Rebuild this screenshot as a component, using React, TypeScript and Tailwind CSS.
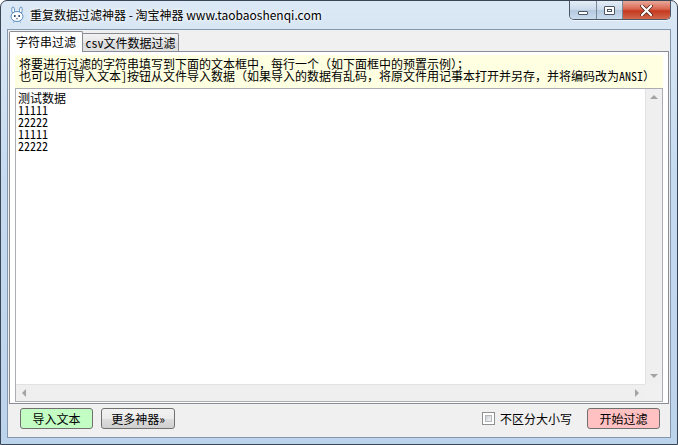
import React from "react";

const ui = "font-['Noto_Sans_CJK_SC','Noto_Sans',sans-serif]";
const mono = "font-['Noto_Sans_Mono_CJK_SC','Noto_Sans_CJK_SC',monospace]";

const AppIcon = () => (
  <svg width="16" height="17" viewBox="0 0 16 17">
    <path d="M4 1 C2.5 1 2.5 5 3.5 7 L5.5 6.5 C5.5 4 5.5 1 4 1Z" fill="#fff" stroke="#4a7fb8" strokeWidth="0.9" />
    <path d="M12 1 C13.5 1 13.5 5 12.5 7 L10.5 6.5 C10.5 4 10.5 1 12 1Z" fill="#fff" stroke="#4a7fb8" strokeWidth="0.9" />
    <ellipse cx="8" cy="10.5" rx="6" ry="5" fill="#fff" stroke="#4a7fb8" strokeWidth="0.9" />
    <circle cx="5.8" cy="10" r="1" fill="#1d3e66" />
    <circle cx="10.2" cy="10" r="1" fill="#1d3e66" />
    <path d="M7 12.5 Q8 13.3 9 12.5" stroke="#1d3e66" strokeWidth="0.7" fill="none" />
    <path d="M5 15.5 L4.5 16.5 M11 15.5 L11.5 16.5" stroke="#4a7fb8" strokeWidth="0.9" />
  </svg>
);

const CaptionButtons = () => (
  <div className="flex h-[19px] mr-[6px] rounded-b-[5px] border border-t-0 border-[#4c5868] overflow-hidden shadow-[0_1px_0_rgba(255,255,255,0.6)]">
    <div className="w-[27px] flex items-center justify-center bg-[linear-gradient(180deg,#e4edf7_0%,#c9d9ea_50%,#b4c8de_51%,#c9dbee_100%)] border-r border-[#7a8797]">
      <div className="w-[10px] h-[4px] mt-[5px] bg-white border border-[#4b5563] rounded-[1px]" />
    </div>
    <div className="w-[26px] flex items-center justify-center bg-[linear-gradient(180deg,#e4edf7_0%,#c9d9ea_50%,#b4c8de_51%,#c9dbee_100%)] border-r border-[#7a8797]">
      <div className="w-[11px] h-[9px] border border-[#4b5563] bg-white rounded-[1px] flex items-center justify-center">
        <div className="w-[5px] h-[3px] border border-[#4b5563]" />
      </div>
    </div>
    <div className="w-[47px] flex items-center justify-center bg-[linear-gradient(180deg,#e9a99b_0%,#d8664f_45%,#c5391f_55%,#d2694d_100%)]">
      <svg width="13" height="11" viewBox="0 0 13 11">
        <path d="M2 1 L11 10 M11 1 L2 10" stroke="#4a1e14" strokeWidth="3.6" strokeLinecap="round" />
        <path d="M2 1 L11 10 M11 1 L2 10" stroke="#fff" strokeWidth="2.2" strokeLinecap="round" />
      </svg>
    </div>
  </div>
);

const Arrow = ({ dir }: { dir: "up" | "down" | "left" | "right" }) => {
  const pts = {
    up: "0,4 4,0 8,4",
    down: "0,0 8,0 4,4",
    left: "4,0 4,8 0,4",
    right: "0,0 0,8 4,4",
  }[dir];
  const vert = dir === "up" || dir === "down";
  return (
    <svg width={vert ? 8 : 4} height={vert ? 4 : 8} viewBox={vert ? "0 0 8 4" : "0 0 4 8"}>
      <polygon points={pts} fill="#a3a3a3" />
    </svg>
  );
};

const lines = ["测试数据", "11111", "22222", "11111", "22222"];

export default function App() {
  return (
    <div className={`w-[678px] h-[445px] flex flex-col border border-[#3a4556] rounded-t-[7px] bg-[linear-gradient(180deg,#dbe8f5_0%,#c6dbf0_40%,#bcd3ec_100%)] overflow-hidden ${ui}`}>
      {/* title bar */}
      <div className="h-[28px] flex items-start justify-between">
        <div className="flex items-center h-[27px] pl-[8px] gap-[5px]">
          <AppIcon />
          <span className="text-[12px] text-black leading-none [text-shadow:0_0_6px_#fff,0_0_3px_#fff]">
            重复数据过滤神器 - 淘宝神器 www.taobaoshenqi.com
          </span>
        </div>
        <CaptionButtons />
      </div>

      {/* client */}
      <div className="flex-1 mx-[6px] mb-[6px] border border-[#8597ab] bg-[#f0f0f0] flex flex-col">
        <div className="flex-1 flex flex-col px-[1px] pt-[1px]">
          {/* tabs */}
          <div className="flex items-end h-[20px] relative z-10">
            <div className="h-[21px] w-[74px] -mb-[1px] bg-white border border-b-0 border-[#898c95] rounded-t-[2px] flex items-center justify-center text-[12px] text-black">
              字符串过滤
            </div>
            <div className="h-[18px] w-[97px] -ml-[1px] bg-[linear-gradient(180deg,#f2f2f2_0%,#e6e6e6_50%,#d9d9d9_51%,#e3e3e3_100%)] border border-b-0 border-[#898c95] rounded-t-[2px] flex items-center justify-center text-[12px] text-black">
              <span className={mono}>csv</span>文件数据过滤
            </div>
          </div>

          {/* tab panel */}
          <div className="h-[353px] border border-[#898c95] bg-white px-[5px] pt-[3px] flex flex-col">
            <div className={`h-[33px] bg-[#ffffe1] px-[4px] pt-[3px] text-[12px] leading-[12px] text-black whitespace-nowrap ${mono}`}>
              <div>将要进行过滤的字符串填写到下面的文本框中，每行一个（如下面框中的预置示例）；</div>
              <div>也可以用[导入文本]按钮从文件导入数据（如果导入的数据有乱码，将原文件用记事本打开并另存，并将编码改为ANSI）</div>
            </div>
            <div className="h-[314px] border border-[#abadb3] bg-white flex flex-col">
              <div className="flex-1 flex">
                <div className={`flex-1 pl-[2px] pt-[3px] text-[12px] leading-[12px] text-black ${mono}`}>
                  {lines.map((l, i) => (
                    <div key={i}>{l}</div>
                  ))}
                </div>
                <div className="w-[17px] bg-[#efefef] flex flex-col items-center justify-between py-[6px] border-l border-[#e2e2e2]">
                  <Arrow dir="up" />
                  <Arrow dir="down" />
                </div>
              </div>
              <div className="h-[17px] flex">
                <div className="flex-1 bg-[#efefef] flex items-center justify-between px-[6px] border-t border-[#e2e2e2]">
                  <Arrow dir="left" />
                  <Arrow dir="right" />
                </div>
                <div className="w-[17px] bg-[#f0f0f0]" />
              </div>
            </div>
          </div>
        </div>

        {/* bottom bar */}
        <div className="h-[33px] flex items-start pt-[4px] pl-[12px] pr-[10px] text-[12px] text-black">
          <button className="w-[73px] h-[21px] border border-[#707070] rounded-[3px] bg-[#c3fdc3] flex items-center justify-center leading-none">
            导入文本
          </button>
          <button className="ml-[8px] w-[74px] h-[21px] border border-[#707070] rounded-[3px] bg-[linear-gradient(180deg,#f2f2f2_0%,#ebebeb_50%,#dddddd_51%,#cfcfcf_100%)] flex items-center justify-center leading-none">
            更多神器»
          </button>
          <div className="flex-1" />
          <label className="flex items-center h-[21px] gap-[5px] mr-[15px]">
            <span className="w-[13px] h-[13px] border border-[#8e8f8f] bg-white p-[2px] flex">
              <span className="flex-1 bg-[linear-gradient(135deg,#cbcfd5,#f6f6f6)] border border-[#b4b8be]" />
            </span>
            <span className="leading-none">不区分大小写</span>
          </label>
          <button className="w-[73px] h-[21px] border border-[#707070] rounded-[3px] bg-[#ffc1c1] flex items-center justify-center leading-none">
            开始过滤
          </button>
        </div>
      </div>
    </div>
  );
}
